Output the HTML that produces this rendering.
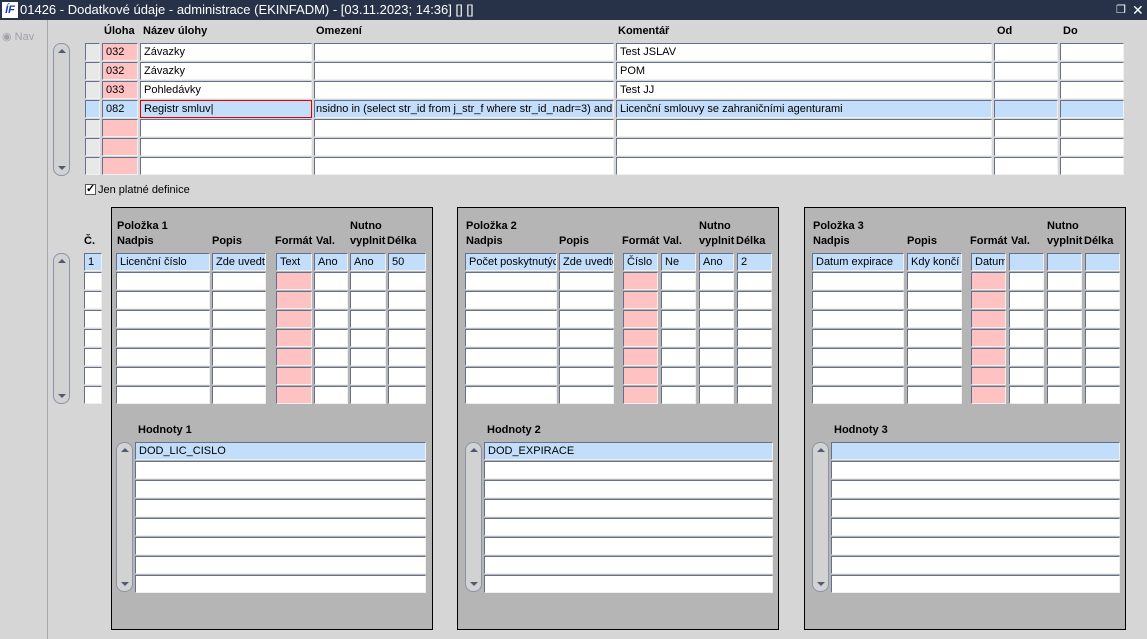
<!DOCTYPE html>
<html><head><meta charset="utf-8"><style>
*{margin:0;padding:0;box-sizing:border-box}
body{width:1147px;height:639px;background:#d6d6d6;font-family:"Liberation Sans",Arial,sans-serif;font-size:11px;position:relative;overflow:hidden;color:#000}
.a{position:absolute}
.t{position:absolute;height:20px;left:0;top:0;width:1147px;background:#273248;color:#fff;font-size:13px;line-height:20px}
.f{position:absolute;height:18px;background:#fff;border:1px solid;border-color:#66708c #f0f0f0 #f0f0f0 #66708c;padding-left:3px;line-height:16px;white-space:nowrap;overflow:hidden;font-size:11px}
.b{background:#c2defa}.p{background:#ffc2c2}.g{background:#e8e8e8}
.l{position:absolute;font-weight:bold;font-size:11px;white-space:nowrap}
.pn{position:absolute;top:207px;height:423px;background:#b5b5b5;border:1px solid #000}
.sb{position:absolute;width:17px;border:1px solid #8a93a8;border-radius:8px;background:#d2d2d2}
.sb:before,.sb:after{content:"";position:absolute;left:4px;border-left:4px solid transparent;border-right:4px solid transparent}
.sb:before{top:5px;border-bottom:4px solid #505a70}
.sb:after{bottom:5px;border-top:4px solid #505a70}
</style></head><body>
<div class="t"><span class="a" style="left:2px;top:2px;width:16px;height:16px;background:#fff;color:#1a3ab0;font-weight:bold;font-style:italic;font-size:11px;line-height:16px;text-align:center">ÍF</span><span class="a" style="left:20px">01426 - Dodatkové údaje - administrace (EKINFADM) - [03.11.2023; 14:36] [] []</span><span class="a" style="left:1116px;font-size:11px">❐</span><span class="a" style="left:1132px;font-size:14px">✕</span></div>
<div class="a" style="left:47px;top:20px;width:1px;height:619px;background:#a8a8a8"></div>
<div class="a" style="left:2px;top:30px;color:#a0a0a8;font-size:11px">◉ Nav</div>
<div class="l" style="left:104px;top:25px">Úloha</div><div class="l" style="left:143px;top:25px">Název úlohy</div><div class="l" style="left:316px;top:25px">Omezení</div><div class="l" style="left:618px;top:25px">Komentář</div><div class="l" style="left:997px;top:25px">Od</div><div class="l" style="left:1063px;top:25px">Do</div>
<div class="sb" style="left:53px;top:43px;height:133px"></div>
<div class="f g" style="left:85px;top:43px;width:15px"></div><div class="f p" style="left:102px;top:43px;width:36px">032</div><div class="f" style="left:140px;top:43px;width:172px">Závazky</div><div class="f" style="left:314px;top:43px;width:300px"></div><div class="f" style="left:616px;top:43px;width:376px">Test JSLAV</div><div class="f" style="left:994px;top:43px;width:64px"></div><div class="f" style="left:1060px;top:43px;width:64px"></div>
<div class="f g" style="left:85px;top:62px;width:15px"></div><div class="f p" style="left:102px;top:62px;width:36px">032</div><div class="f" style="left:140px;top:62px;width:172px">Závazky</div><div class="f" style="left:314px;top:62px;width:300px"></div><div class="f" style="left:616px;top:62px;width:376px">POM</div><div class="f" style="left:994px;top:62px;width:64px"></div><div class="f" style="left:1060px;top:62px;width:64px"></div>
<div class="f g" style="left:85px;top:81px;width:15px"></div><div class="f p" style="left:102px;top:81px;width:36px">033</div><div class="f" style="left:140px;top:81px;width:172px">Pohledávky</div><div class="f" style="left:314px;top:81px;width:300px"></div><div class="f" style="left:616px;top:81px;width:376px">Test JJ</div><div class="f" style="left:994px;top:81px;width:64px"></div><div class="f" style="left:1060px;top:81px;width:64px"></div>
<div class="f b" style="left:85px;top:100px;width:15px"></div><div class="f b" style="left:102px;top:100px;width:36px">082</div><div class="f b" style="left:140px;top:100px;width:172px;border-color:#e00000">Registr smluv|</div><div class="f b" style="left:314px;top:100px;width:300px;padding-left:1px">nsidno in (select str_id from j_str_f where str_id_nadr=3) and</div><div class="f b" style="left:616px;top:100px;width:376px">Licenční smlouvy se zahraničními agenturami</div><div class="f b" style="left:994px;top:100px;width:64px"></div><div class="f b" style="left:1060px;top:100px;width:64px"></div>
<div class="f g" style="left:85px;top:119px;width:15px"></div><div class="f p" style="left:102px;top:119px;width:36px"></div><div class="f" style="left:140px;top:119px;width:172px"></div><div class="f" style="left:314px;top:119px;width:300px"></div><div class="f" style="left:616px;top:119px;width:376px"></div><div class="f" style="left:994px;top:119px;width:64px"></div><div class="f" style="left:1060px;top:119px;width:64px"></div>
<div class="f g" style="left:85px;top:138px;width:15px"></div><div class="f p" style="left:102px;top:138px;width:36px"></div><div class="f" style="left:140px;top:138px;width:172px"></div><div class="f" style="left:314px;top:138px;width:300px"></div><div class="f" style="left:616px;top:138px;width:376px"></div><div class="f" style="left:994px;top:138px;width:64px"></div><div class="f" style="left:1060px;top:138px;width:64px"></div>
<div class="f g" style="left:85px;top:157px;width:15px"></div><div class="f p" style="left:102px;top:157px;width:36px"></div><div class="f" style="left:140px;top:157px;width:172px"></div><div class="f" style="left:314px;top:157px;width:300px"></div><div class="f" style="left:616px;top:157px;width:376px"></div><div class="f" style="left:994px;top:157px;width:64px"></div><div class="f" style="left:1060px;top:157px;width:64px"></div>
<div class="a" style="left:85px;top:184px;width:11px;height:11px;background:#fff;border:1px solid #555;font-size:11px;line-height:9px;font-weight:bold">✓</div><div class="a" style="left:98px;top:184px;font-size:11px">Jen platné definice</div>
<div class="l" style="left:84px;top:235px">Č.</div>
<div class="sb" style="left:53px;top:253px;height:151px"></div>
<div class="pn" style="left:111px;width:322px"></div>
<div class="pn" style="left:457px;width:322px"></div>
<div class="pn" style="left:804px;width:322px"></div>
<div class="f b" style="left:84px;top:253px;width:18px">1</div>
<div class="f" style="left:84px;top:272px;width:18px"></div><div class="f" style="left:84px;top:291px;width:18px"></div><div class="f" style="left:84px;top:310px;width:18px"></div><div class="f" style="left:84px;top:329px;width:18px"></div><div class="f" style="left:84px;top:348px;width:18px"></div><div class="f" style="left:84px;top:367px;width:18px"></div><div class="f" style="left:84px;top:386px;width:18px"></div>
<div id="panels"></div>
<script>
var P=[[111,[116,94],[212,54],[276,36],[314,34],[350,36],[388,38],["Licenční číslo","Zde uvedte","Text","Ano","Ano","50"],1,"DOD_LIC_CISLO",116,135,291],
[457,[465,92],[559,55],[623,35],[661,35],[699,35],[737,35],["Počet poskytnutých","Zde uvedte","Číslo","Ne","Ano","2"],2,"DOD_EXPIRACE",465,484,289],
[804,[812,92],[907,55],[971,35],[1009,35],[1047,35],[1085,35],["Datum expirace","Kdy končí p","Datum","","",""],3,"",812,831,289]];
var h="";
P.forEach(function(q){var L=q[0],c=[q[1],q[2],q[3],q[4],q[5],q[6]];
h+='<div class="l" style="left:'+(c[0][0]+1)+'px;top:220px">Položka '+q[8]+'</div>';
h+='<div class="l" style="left:'+(c[0][0]+1)+'px;top:235px">Nadpis</div>';
h+='<div class="l" style="left:'+(c[1][0])+'px;top:235px">Popis</div>';
h+='<div class="l" style="left:'+(c[2][0]-1)+'px;top:235px">Formát</div>';
h+='<div class="l" style="left:'+(c[3][0]+2)+'px;top:235px">Val.</div>';
h+='<div class="l" style="left:'+(c[4][0])+'px;top:220px">Nutno</div>';
h+='<div class="l" style="left:'+(c[4][0])+'px;top:235px">vyplnit</div>';
h+='<div class="l" style="left:'+(c[5][0]-1)+'px;top:235px">Délka</div>';
for(var r=0;r<8;r++)for(var k=0;k<6;k++){var cl=r==0?"f b":(k==2?"f p":"f");
h+='<div class="'+cl+'" style="left:'+c[k][0]+'px;top:'+(253+19*r)+'px;width:'+c[k][1]+'px">'+(r==0?q[7][k]:"")+'</div>';}
h+='<div class="l" style="left:'+(q[11]+3)+'px;top:424px">Hodnoty '+q[8]+'</div>';
h+='<div class="sb" style="left:'+q[10]+'px;top:442px;height:150px"></div>';
for(var r=0;r<8;r++)h+='<div class="'+(r==0?"f b":"f")+'" style="left:'+q[11]+'px;top:'+(442+19*r)+'px;width:'+q[12]+'px">'+(r==0?q[9]:"")+'</div>';
});
document.getElementById("panels").innerHTML=h;
</script>
</body></html>
